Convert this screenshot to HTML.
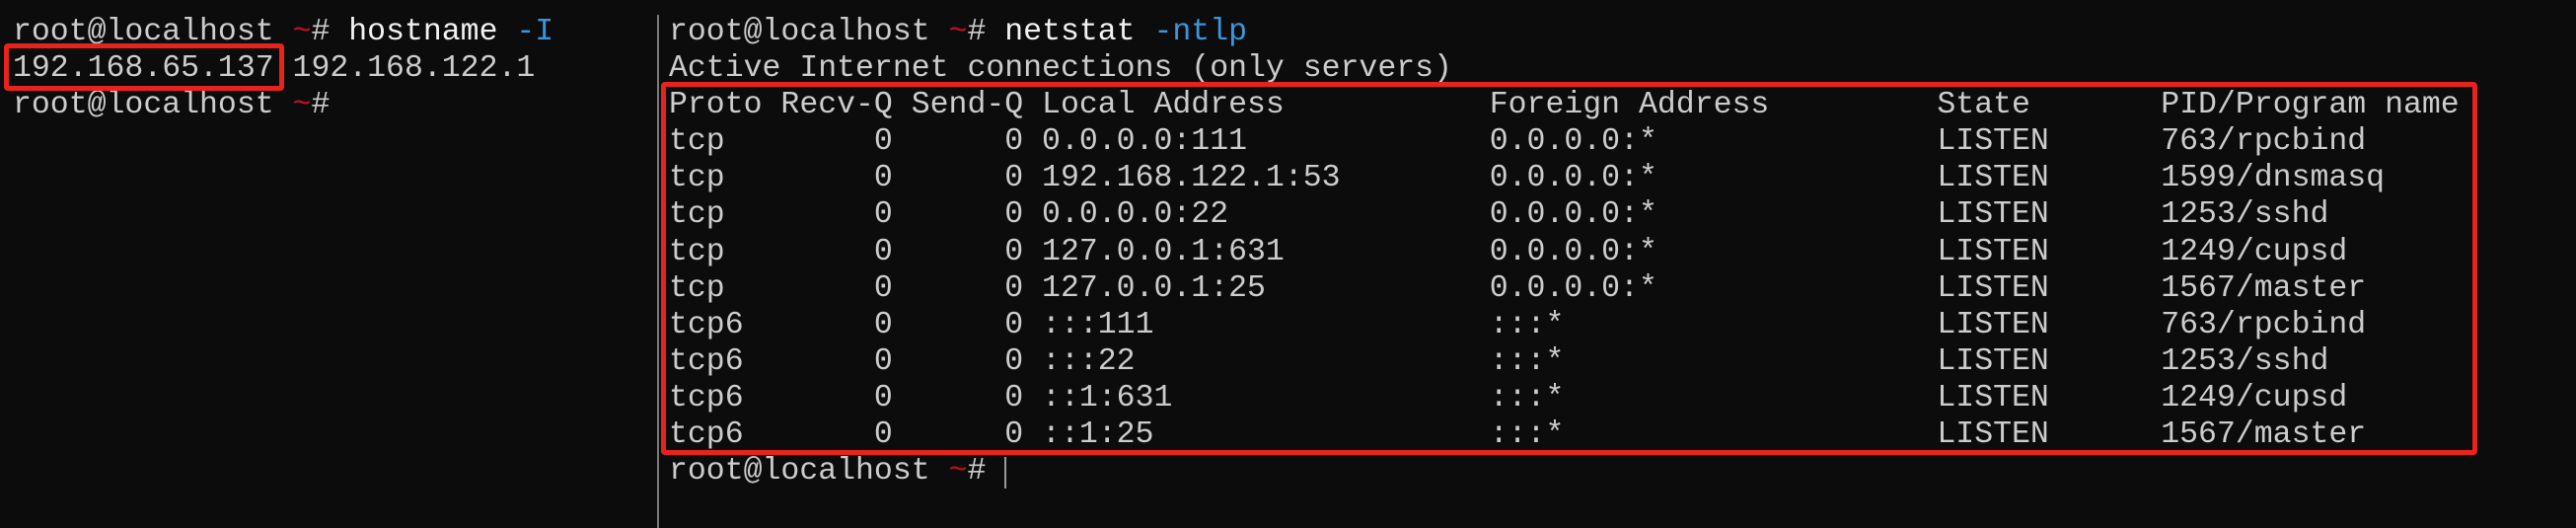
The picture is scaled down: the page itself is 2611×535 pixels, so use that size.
<!DOCTYPE html>
<html><head><meta charset="utf-8"><style>
html,body{margin:0;padding:0;background:#0c0c0c;width:2611px;height:535px;overflow:hidden;position:relative}
pre{position:absolute;margin:0;font-family:"Liberation Mono","DejaVu Sans Mono",monospace;font-size:31.5px;line-height:37.1px;color:#cccccc;white-space:pre}
.t{color:#c50f1f}.w{color:#f2f2f2}.b{color:#3a96dd}
.box{position:absolute;border:5px solid #e8221c;border-radius:4px;box-sizing:border-box}
</style></head><body>
<pre style="left:13px;top:14px">root@localhost <span class="t">~</span># <span class="w">hostname</span> <span class="b">-I</span>
192.168.65.137 192.168.122.1
root@localhost <span class="t">~</span>#</pre>
<div style="position:absolute;left:666px;top:15px;width:2px;height:520px;background:#7a7a7a"></div>
<pre style="left:678px;top:14px">root@localhost <span class="t">~</span># <span class="w">netstat</span> <span class="b">-ntlp</span>
Active Internet connections (only servers)
Proto Recv-Q Send-Q Local Address           Foreign Address         State       PID/Program name
tcp        0      0 0.0.0.0:111             0.0.0.0:*               LISTEN      763/rpcbind
tcp        0      0 192.168.122.1:53        0.0.0.0:*               LISTEN      1599/dnsmasq
tcp        0      0 0.0.0.0:22              0.0.0.0:*               LISTEN      1253/sshd
tcp        0      0 127.0.0.1:631           0.0.0.0:*               LISTEN      1249/cupsd
tcp        0      0 127.0.0.1:25            0.0.0.0:*               LISTEN      1567/master
tcp6       0      0 :::111                  :::*                    LISTEN      763/rpcbind
tcp6       0      0 :::22                   :::*                    LISTEN      1253/sshd
tcp6       0      0 ::1:631                 :::*                    LISTEN      1249/cupsd
tcp6       0      0 ::1:25                  :::*                    LISTEN      1567/master
root@localhost <span class="t">~</span># </pre>
<div style="position:absolute;left:1018px;top:463px;width:2px;height:32px;background:#999"></div>
<div class="box" style="left:4px;top:44px;width:284px;height:48px"></div>
<div class="box" style="left:670px;top:83px;width:1841px;height:378px"></div>
</body></html>
